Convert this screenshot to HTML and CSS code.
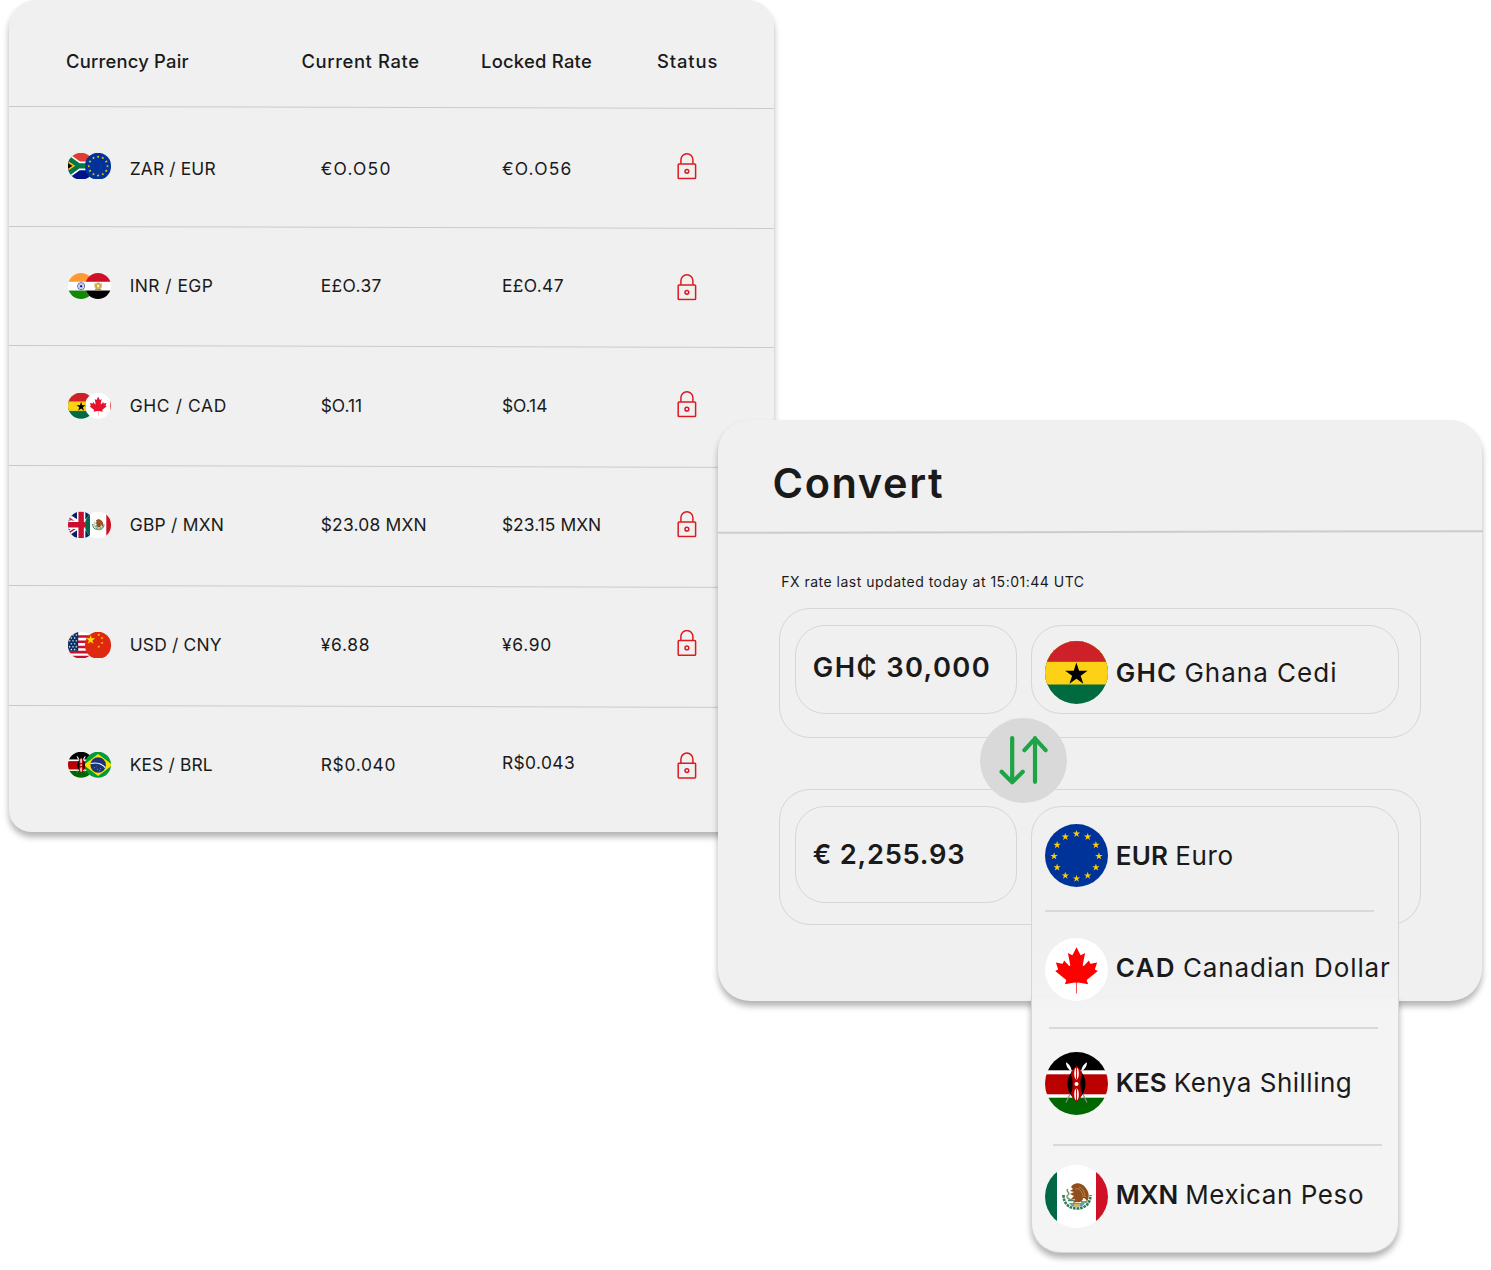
FILE: index.html
```html
<!DOCTYPE html>
<html lang="en">
<head>
<meta charset="utf-8">
<title>FX rates</title>
<link rel="stylesheet" href="styles.css">
</head>
<body>
<svg class="sprite" aria-hidden="true">
  <defs>
    <path id="star" d="M0-1 .2245-.309 .9511-.309 .3633.118 .5878.809 0 .382-.5878.809-.3633.118-.9511-.309-.2245-.309Z"/>
    <path id="leaf" d="M4830 4430V3500L4956 3469l859 151-116-320a65 65 0 0 1 20-73l941-762-212-99a65 65 0 0 1-34-79l186-572-542 115a65 65 0 0 1-73-38l-105-247-423 454a65 65 0 0 1-111-57l204-1052-327 189a65 65 0 0 1-91-27l-332-652-332 652a65 65 0 0 1-91 27l-327-189 204 1052a65 65 0 0 1-111 57l-423-454-105 247a65 65 0 0 1-73 38l-542-115 186 572a65 65 0 0 1-34 79l-212 99 941 762a65 65 0 0 1 20 73l-116 320 859-151L4770 3500V4430Z"/>

    <symbol id="flag-eu" viewBox="0 0 63 63">
      <rect width="63" height="63" fill="#039"/>
      <g fill="#fc0">
        <use href="#star" transform="translate(31.5 9.8) scale(3.9)"/>
        <use href="#star" transform="translate(42.7 12.8) scale(3.9)"/>
        <use href="#star" transform="translate(50.9 21) scale(3.9)"/>
        <use href="#star" transform="translate(53.9 32.2) scale(3.9)"/>
        <use href="#star" transform="translate(50.9 43.4) scale(3.9)"/>
        <use href="#star" transform="translate(42.7 51.6) scale(3.9)"/>
        <use href="#star" transform="translate(31.5 54.6) scale(3.9)"/>
        <use href="#star" transform="translate(20.3 51.6) scale(3.9)"/>
        <use href="#star" transform="translate(12.1 43.4) scale(3.9)"/>
        <use href="#star" transform="translate(9.1 32.2) scale(3.9)"/>
        <use href="#star" transform="translate(12.1 21) scale(3.9)"/>
        <use href="#star" transform="translate(20.3 12.8) scale(3.9)"/>
      </g>
    </symbol>
    <symbol id="flag-za" viewBox="0 0 63 63">
      <rect width="63" height="31.5" fill="#e03c31"/>
      <rect y="31.5" width="63" height="31.5" fill="#001489"/>
      <path d="M-16 2 25 31.5-16 61M22 31.5H63" fill="none" stroke="#fff" stroke-width="21"/>
      <path d="M-16 2 25 31.5-16 61Z" fill="#007749"/>
      <path d="M-16 2 25 31.5-16 61M22 31.5H63" fill="none" stroke="#007749" stroke-width="13"/>
      <path d="M-6 18 14 31.5-6 45Z" fill="#000" stroke="#ffb81c" stroke-width="4"/>
    </symbol>
    <symbol id="flag-in" viewBox="0 0 63 63">
      <rect width="63" height="63" fill="#fff"/>
      <rect width="63" height="21" fill="#f93"/>
      <rect y="42" width="63" height="21" fill="#138808"/>
      <circle cx="31.5" cy="31.5" r="8.6" fill="#fff" stroke="#3a3a9f" stroke-width="1.8"/>
      <path d="M31.5 23v17M23 31.5h17M25.5 25.5l12 12M37.5 25.5l-12 12" stroke="#3a3a9f" stroke-width="1"/>
      <circle cx="31.5" cy="31.5" r="2.4" fill="#008"/>
    </symbol>
    <symbol id="flag-eg" viewBox="0 0 63 63">
      <rect width="63" height="63" fill="#fff"/>
      <rect width="63" height="21" fill="#ce1126"/>
      <rect y="42" width="63" height="21" fill="#000"/>
      <path d="M23 24l4 2 2-3h5l2 3 4-2v12l-3-1v3H26v-3l-3 1Z" fill="#d0aa3e"/>
      <path d="M29 28h5v6h-5Z" fill="#fff6d8"/>
      <path d="M24 38h15v2.500H24Z" fill="#c09300"/>
    </symbol>
    <symbol id="flag-gh" viewBox="0 0 63 63">
      <rect width="63" height="63" fill="#006b3f"/>
      <rect width="63" height="44" fill="#7f9f2a"/>
      <rect width="63" height="43" fill="#fcd116"/>
      <rect width="63" height="20.8" fill="#ce2028"/>
      <use href="#star" transform="translate(31.4 33.3) scale(11.8)"/>
    </symbol>
    <symbol id="flag-ca" viewBox="0 0 63 63">
      <rect width="63" height="63" fill="#fff"/>
      <use href="#leaf" fill="red" transform="translate(-23.46 4.76) scale(.01145)"/>
    </symbol>
    <symbol id="flag-ca-bars" viewBox="0 0 63 63">
      <rect width="63" height="63" fill="#fff"/>
      <path d="M0 0h1v63H0ZM60.500 0h3v63h-3Z" fill="#d52b1e"/>
      <use href="#leaf" fill="#e8112d" transform="translate(-21.5 5.2) scale(.01105)"/>
    </symbol>
    <symbol id="flag-gb" viewBox="0 0 63 63">
      <rect width="63" height="63" fill="#012169"/>
      <path d="M-16 0 79 63M79 0-16 63" stroke="#fff" stroke-width="11"/>
      <path d="M-16 3 31 34M79 60 31 29M79 0 31 31.500M-16 63 31 31.500" stroke="#c8102e" stroke-width="3.500"/>
      <path d="M31.500 0v63M0 31.500h63" stroke="#fff" stroke-width="20"/>
      <path d="M31.500 0v63M0 31.500h63" stroke="#c8102e" stroke-width="13"/>
    </symbol>
    <symbol id="flag-mx" viewBox="0 0 63 63">
      <rect width="63" height="63" fill="#fff"/>
      <rect width="12" height="63" fill="#006847"/>
      <rect x="51" width="12" height="63" fill="#ce1126"/>
      <path d="M18.500 30c0 8 5 13.500 13.500 13.500S45.500 38 45.500 30" fill="none" stroke="#2f7a55" stroke-width="2.600" stroke-dasharray="2.600 .9"/>
      <path d="M24 38h16l-3 3.500H27Z" fill="#5b9fb5"/>
      <path d="M29 39h6v2.500h-6Z" fill="#e3b23c"/>
      <path d="M26 22c3-5 10-5 14 0 4 5 5 9 2 15-1-3-2-4-4-4 0 3-3 5-6 4l-4 1 2-4-5 1 4-4-4-2 4-2-4-1 3-2Z" fill="#8f4e1c"/>
      <path d="M30 24c4-2 8 3 8 8M34 22c4 1 6 6 6 10" fill="none" stroke="#c08a4a" stroke-width=".9"/>
      <path d="M23 24c-3 2 3 4 0 6s1 4 3 5" fill="none" stroke="#6f9f62" stroke-width="1.500"/>
      <path d="M23 35.500h6M36 37h6" stroke="#3d8a5f" stroke-width="1.600"/>
    </symbol>
    <symbol id="flag-us" viewBox="0 0 63 63">
      <rect width="63" height="63" fill="#fff"/>
      <path d="M0 11.500h63M0 24h63M0 36.500h63M0 49h63M0 60.500h63" stroke="#c8102e" stroke-width="6.200"/>
      <rect width="24.500" height="46" fill="#0a3161"/>
      <g fill="#fff">
        <use href="#star" transform="translate(12 8) scale(2.800)"/><use href="#star" transform="translate(20 8) scale(2.800)"/>
        <use href="#star" transform="translate(8 15) scale(2.800)"/><use href="#star" transform="translate(16 15) scale(2.800)"/>
        <use href="#star" transform="translate(4 22) scale(2.800)"/><use href="#star" transform="translate(12 22) scale(2.800)"/><use href="#star" transform="translate(20 22) scale(2.800)"/>
        <use href="#star" transform="translate(8 29) scale(2.800)"/><use href="#star" transform="translate(16 29) scale(2.800)"/>
        <use href="#star" transform="translate(4 36) scale(2.800)"/><use href="#star" transform="translate(12 36) scale(2.800)"/><use href="#star" transform="translate(20 36) scale(2.800)"/>
        <use href="#star" transform="translate(8 42.500) scale(2.800)"/><use href="#star" transform="translate(16 42.500) scale(2.800)"/>
      </g>
    </symbol>
    <symbol id="flag-cn" viewBox="0 0 63 63">
      <rect width="63" height="63" fill="#de2910"/>
      <g fill="#ffde00">
        <use href="#star" transform="translate(13.500 19.500) scale(11.500)"/>
        <use href="#star" transform="translate(33 7.500) rotate(20) scale(3.800)"/>
        <use href="#star" transform="translate(41 15) rotate(-20) scale(3.800)"/>
        <use href="#star" transform="translate(41 27) scale(3.800)"/>
        <use href="#star" transform="translate(33 36) rotate(20) scale(3.800)"/>
      </g>
    </symbol>
    <symbol id="flag-ke" viewBox="0 0 63 63">
      <rect width="63" height="63" fill="#fff"/>
      <rect width="63" height="18.300" fill="#000"/>
      <rect y="22.300" width="63" height="20" fill="#b00"/>
      <rect y="45.700" width="63" height="18" fill="#060"/>
      <path d="M25 16 42 50.500M38 16 21 50.500" stroke="#888" stroke-width="1.200"/>
      <path d="M21 10.300c3 1.500 5.500 5 5.500 9-3-1.500-5.500-5-5.500-9ZM42 10.300c-3 1.500-5.500 5-5.500 9 3-1.500 5.500-5 5.500-9Z" fill="#fff"/>
      <path d="M31.500 15c-12 9-12 25 0 34 12-9 12-25 0-34Z" fill="#000"/>
      <path d="M31.500 14c-3.500 3-5.500 6-5.500 9 3 5 3 12 0 18 0 3 2 6 5.500 9 3.500-3 5.500-6 5.500-9-3-6-3-13 0-18 0-3-2-6-5.500-9Z" fill="#b00"/>
      <path d="M27.500 24h8v16h-8Z" fill="#b00"/>
      <ellipse cx="31.500" cy="21.500" rx="2.300" ry="6" fill="#fff"/>
      <ellipse cx="31.500" cy="42.500" rx="2.300" ry="6" fill="#fff"/>
      <path d="M31.500 14v13M31.500 37v13" stroke="#b00" stroke-width=".9"/>
      <circle cx="31.500" cy="32" r="2" fill="#fff"/>
    </symbol>
    <symbol id="flag-br" viewBox="0 0 63 63">
      <rect width="63" height="63" fill="#009b3a"/>
      <path d="M-3 31.500 31.500 5 66 31.500 31.500 58Z" fill="#fedf00"/>
      <circle cx="31.500" cy="31.500" r="18.500" fill="#1b3479"/>
      <path d="M13.500 28c13-3 27 0 35 10" fill="none" stroke="#fff" stroke-width="2.600"/>
      <path d="M22 38h2M29 42h2M36 40h2M27 35h1M34 45h2" stroke="#c9d4ea" stroke-width="1.500"/>
    </symbol>
    <symbol id="lock" viewBox="0 0 20 27">
      <g fill="none" stroke="#dc1a1f" stroke-width="1.500">
        <rect x="1.200" y="11.200" width="17.400" height="14.600" rx=".8"/>
        <path d="M3.900 11V7a6 6 0 0 1 12 0v4"/>
        <circle cx="9.900" cy="18.500" r="1.900"/>
      </g>
    </symbol>
  </defs>
</svg>

<main class="stage">
  <section class="rates">
    <div class="rates-head">
      <span class="h-pair">Currency Pair</span>
      <span class="h-current">Current Rate</span>
      <span class="h-locked">Locked Rate</span>
      <span class="h-status">Status</span>
    </div>

    <div class="rate-row row-zar">
      <div class="flags"><svg><use href="#flag-za"/></svg><svg><use href="#flag-eu"/></svg></div>
      <span class="pair">ZAR / EUR</span><span class="current">€O.O50</span><span class="locked">€O.O56</span>
      <svg class="lock"><use href="#lock"/></svg>
    </div>
    <div class="rate-row row-inr">
      <div class="flags"><svg><use href="#flag-in"/></svg><svg><use href="#flag-eg"/></svg></div>
      <span class="pair">INR / EGP</span><span class="current">E£O.37</span><span class="locked">E£O.47</span>
      <svg class="lock"><use href="#lock"/></svg>
    </div>
    <div class="rate-row row-ghc">
      <div class="flags"><svg><use href="#flag-gh"/></svg><svg><use href="#flag-ca-bars"/></svg></div>
      <span class="pair">GHC / CAD</span><span class="current">$O.11</span><span class="locked">$O.14</span>
      <svg class="lock"><use href="#lock"/></svg>
    </div>
    <div class="rate-row row-gbp">
      <div class="flags"><svg><use href="#flag-gb"/></svg><svg><use href="#flag-mx"/></svg></div>
      <span class="pair">GBP / MXN</span><span class="current">$23.08 MXN</span><span class="locked">$23.15 MXN</span>
      <svg class="lock"><use href="#lock"/></svg>
    </div>
    <div class="rate-row row-usd">
      <div class="flags"><svg><use href="#flag-us"/></svg><svg><use href="#flag-cn"/></svg></div>
      <span class="pair">USD / CNY</span><span class="current">¥6.88</span><span class="locked">¥6.90</span>
      <svg class="lock"><use href="#lock"/></svg>
    </div>
    <div class="rate-row row-kes">
      <div class="flags"><svg><use href="#flag-ke"/></svg><svg><use href="#flag-br"/></svg></div>
      <span class="pair">KES / BRL</span><span class="current">R$0.040</span><span class="locked">R$0.043</span>
      <svg class="lock"><use href="#lock"/></svg>
    </div>
  </section>

  <section class="convert">
    <header class="convert-head"><h1>Convert</h1></header>
    <p class="updated">FX rate last updated today at 15:01:44 UTC</p>

    <div class="group group-from">
      <div class="amount amount-from">GH₵ 30,000</div>
      <div class="select">
        <div class="currency cur-ghc"><svg class="flag"><use href="#flag-gh"/></svg><b>GHC</b><span>Ghana Cedi</span></div>
      </div>
    </div>

    <button class="swap" aria-label="Swap currencies">
      <svg viewBox="0 0 87 85"><path d="M32 20v44M21.500 53.500 32 64 42.500 53.500M54.700 63.500V20M44.200 32 54.700 20.500 65.200 32"/></svg>
    </button>

    <div class="group group-to">
      <div class="amount amount-to">€ 2,255.93</div>
      <div class="menu">
        <div class="currency cur-eur"><svg class="flag"><use href="#flag-eu"/></svg><b>EUR</b><span>Euro</span></div>
        <hr class="sep-1">
        <div class="currency cur-cad"><svg class="flag"><use href="#flag-ca"/></svg><b>CAD</b><span>Canadian Dollar</span></div>
        <hr class="sep-2">
        <div class="currency cur-kes"><svg class="flag"><use href="#flag-ke"/></svg><b>KES</b><span>Kenya Shilling</span></div>
        <hr class="sep-3">
        <div class="currency cur-mxn"><svg class="flag"><use href="#flag-mx"/></svg><b>MXN</b><span>Mexican Peso</span></div>
      </div>
    </div>
  </section>
</main>
</body>
</html>
```
FILE: styles.css
```css
* { box-sizing: border-box; }

body {
  margin: 0;
  background: #fff;
  color: #1a1a1a;
  font-family: Inter, "Liberation Sans", sans-serif;
}

.sprite { display: none; }

/* Both cards share one grid cell so that they can overlap */
.stage {
  display: grid;
  width: 1491px;
  height: 1270px;
  overflow: hidden;
}

.stage > * { grid-area: 1 / 1; }

/* Rates table */
.rates {
  width: 765px;
  height: 832px;
  margin-left: 9px;
  background: #f0f0f0;
  border-radius: 27px 27px 22px 22px;
  box-shadow: 0 5px 6px rgba(0, 0, 0, .3);
}

.rates-head,
.rate-row {
  display: grid;
  align-items: center;
  white-space: nowrap;
}

.rates-head {
  grid-template-columns: 235.500px 179.500px 176px 1fr;
  height: 107.500px;
  padding: 15px 0 0 57px;
  font-size: 18.400px;
  font-weight: 500;
}

.rate-row {
  position: relative;
  grid-template-columns: 62px 191px 181.200px 175.300px 1fr;
  height: 119.750px;
  padding-left: 58.700px;
  font-size: 17.400px;
}

/* The rules slope down slightly to the right */
.rate-row::before {
  content: "";
  position: absolute;
  inset: -.6px 0 auto;
  height: 1.400px;
  background: #c9cacb;
  transform: skewY(.16deg);
}

.h-pair { letter-spacing: .2px; }
.h-current { letter-spacing: .6px; }
.h-locked { letter-spacing: .25px; }
.h-status { letter-spacing: .9px; }

.flags { display: flex; transform: translateY(var(--flag-y)); }
.flags svg { flex: none; width: 26.300px; height: 26.300px; border-radius: 50%; }
.flags svg + svg { margin-left: -9.100px; }
.rate-row span { transform: translateY(var(--text-y)); }
.lock { width: 20px; height: 27px; transform: translateY(var(--lock-y)); }

.row-zar { --flag-y: -1.300px; --text-y: 1.200px; --lock-y: -1.200px; }
.row-inr { --flag-y: -1px; --text-y: -2.400px; --lock-y: -.2px; }
.row-ghc { --flag-y: -1.200px; --text-y: -.7px; --lock-y: -2.300px; }
.row-gbp { --flag-y: -1.400px; --text-y: -1.600px; --lock-y: -2.300px; }
.row-usd { --flag-y: -1.300px; --text-y: -1.700px; --lock-y: -3.600px; }
.row-kes { --flag-y: -1.200px; --text-y: -2px; --lock-y: -.9px; }
.row-kes .locked { margin-top: -3px; }

.row-zar .pair { letter-spacing: .15px; }
.row-inr .pair { letter-spacing: .45px; }
.row-ghc .pair { letter-spacing: .62px; }
.row-gbp .pair { letter-spacing: .25px; }
.row-usd .pair { letter-spacing: .2px; }
.row-kes .pair { letter-spacing: .15px; }
.row-zar :is(.current, .locked) { letter-spacing: 1.300px; }
.row-inr :is(.current, .locked) { letter-spacing: .4px; }
.row-gbp .current { letter-spacing: .22px; }
.row-gbp .locked { letter-spacing: .05px; }
.row-usd :is(.current, .locked) { letter-spacing: .75px; }
.row-kes .current { letter-spacing: .7px; }
.row-kes .locked { letter-spacing: .4px; }

/* Convert card */
.convert {
  position: relative;
  width: 764.500px;
  height: 581px;
  margin: 419.700px 0 0 717.500px;
  background: #f0f0f0;
  border-radius: 32px;
  box-shadow: 0 5px 6px rgba(0, 0, 0, .3);
}

.convert-head {
  position: relative;
  display: flex;
  align-items: center;
  height: 112px;
  padding: 15px 0 0 55px;
}

.convert-head::after {
  content: "";
  position: absolute;
  inset: auto 0 -1.500px;
  height: 2px;
  background: #cbcccd;
  transform: skewY(-.13deg);
}

.convert-head h1 {
  margin: 0;
  font-size: 41.500px;
  font-weight: 600;
  letter-spacing: 1.600px;
}

.updated {
  margin: 0;
  padding: 39px 0 0 63.700px;
  height: 76.500px;
  font-size: 14px;
  line-height: 21px;
  letter-spacing: .5px;
}

.group {
  display: flex;
  gap: 14px;
  width: 642px;
  margin-left: 61.300px;
  padding: 15.500px;
  border: 1px solid #d6d6d6;
  border-radius: 31px;
}

.group-from { height: 130px; }
.group-to { height: 136px; margin-top: 51px; }

.amount {
  display: flex;
  align-items: center;
  width: 222px;
  padding-left: 16.500px;
  border: 1px solid #d6d6d6;
  border-radius: 30px;
  font-size: 27.300px;
  font-weight: 600;
  white-space: nowrap;
}

.amount-from { height: 89.500px; padding-bottom: 3px; letter-spacing: 1.400px; }
.amount-to { height: 97.500px; letter-spacing: .75px; }

.select,
.menu {
  width: 368px;
  padding-left: 13px;
  border: 1px solid #d6d6d6;
  border-radius: 30px;
}

.select { height: 89.500px; padding-top: 15px; }

.menu {
  position: relative;
  z-index: 1;
  height: 447px;
  padding-top: 17px;
  background: linear-gradient(#f0f0f0 115px, #f1f1f1 175px, #f4f4f4 205px);
}

/* Shadow for the lower part of the menu only */
.menu::before {
  content: "";
  position: absolute;
  z-index: -1;
  inset: 190px -1px -1px;
  border-radius: 0 0 30px 30px;
  box-shadow: 0 5px 6px rgba(0, 0, 0, .3);
}

.currency {
  display: flex;
  align-items: center;
  height: 63px;
  font-size: 26px;
  white-space: nowrap;
}

.flag { flex: none; width: 63px; height: 63px; margin-right: 7.500px; border-radius: 50%; }
.currency b { margin-right: 7px; font-weight: 600; }

.cur-ghc b { letter-spacing: 1.200px; }
.cur-ghc span { letter-spacing: 1px; }
.cur-eur b { letter-spacing: .2px; }
.cur-eur span { letter-spacing: .67px; }
.cur-cad b { letter-spacing: 1.300px; }
.cur-cad span { letter-spacing: .9px; }
.cur-kes span { letter-spacing: .5px; }
.cur-mxn span { letter-spacing: .58px; }
.cur-cad :is(b, span) { margin-bottom: 4px; }
.cur-kes :is(b, span) { margin-bottom: 1px; }
.cur-mxn :is(b, span) { margin-bottom: 4px; }

.menu hr { width: 329px; height: 2px; border: 0; background: #d9d9d9; }
.sep-1 { margin: 23.300px 0 25.700px; }
.sep-2 { margin: 26.300px 0 22.700px 4px; }
.sep-3 { margin: 29.300px 0 18.700px 8px; }

.swap {
  position: absolute;
  left: 262.300px;
  top: 298px;
  width: 87.500px;
  height: 85.500px;
  padding: 0;
  border: 0;
  border-radius: 50%;
  background: #d9d9d9;
}

.swap svg {
  display: block;
  width: 100%;
  height: 100%;
  fill: none;
  stroke: #1fa347;
  stroke-width: 4.200;
  stroke-linecap: round;
  stroke-linejoin: round;
}
```
